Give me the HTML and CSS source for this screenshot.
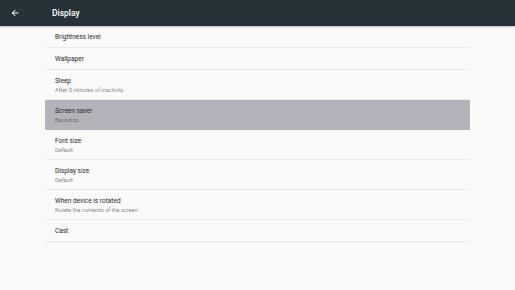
FILE: index.html
```html
<!DOCTYPE html>
<html lang="en">
<head>
    <meta charset="UTF-8">
    <meta name="viewport" content="width=device-width, initial-scale=1.0">
    <title>Display</title>
    <link rel="stylesheet" href="styles.css">
</head>
<body>
    <header class="app-bar">
        <button class="back-button" aria-label="Back">
            <svg width="10" height="10" viewBox="0 0 24 24">
                <path d="M20 11H7.83l5.59-5.59L12 4l-8 8 8 8 1.41-1.41L7.83 13H20v-2z" fill="#fff"/>
            </svg>
        </button>
        <h1>Display</h1>
    </header>

    <ul class="settings-list">
        <li class="setting single"><span class="title">Brightness level</span></li>
        <li class="setting single"><span class="title">Wallpaper</span></li>
        <li class="setting"><span class="title">Sleep</span><span class="summary">After 5 minutes of inactivity</span></li>
        <li class="setting selected"><span class="title">Screen saver</span><span class="summary">Backdrop</span></li>
        <li class="setting"><span class="title">Font size</span><span class="summary">Default</span></li>
        <li class="setting"><span class="title">Display size</span><span class="summary">Default</span></li>
        <li class="setting"><span class="title">When device is rotated</span><span class="summary">Rotate the contents of the screen</span></li>
        <li class="setting single"><span class="title">Cast</span></li>
    </ul>
</body>
</html>
```

FILE: styles.css
```css
body {
    margin: 0;
    font-family: Roboto, "Noto Sans", sans-serif;
    background-color: #fafafa;
}

.app-bar {
    display: flex;
    align-items: center;
    height: 26px;
    background-color: #263238;
    box-shadow: 0 1px 2px rgba(0, 0, 0, 0.25);
}

.back-button {
    display: flex;
    align-items: center;
    justify-content: center;
    width: 10px;
    height: 10px;
    margin-left: 10px;
    padding: 0;
    border: none;
    background: none;
}

.app-bar h1 {
    margin: 0 0 0 32px;
    color: #fff;
    font-size: 8.5px;
    font-weight: 500;
}

.settings-list {
    list-style-type: none;
    margin: 0 0 0 45px;
    padding: 0;
    width: 425px;
}

.setting {
    display: flex;
    flex-direction: column;
    justify-content: center;
    height: 30px;
    padding: 2px 0 0 10px;
    border-bottom: 1px solid #ececec;
    box-sizing: border-box;
}

.setting.single {
    height: 22px;
}

.setting.selected {
    background-color: #b4b3bb;
    border-bottom-color: #b4b3bb;
}

.title {
    color: #262626;
    font-size: 6.5px;
    line-height: 9px;
}

.summary {
    color: #8a8a8a;
    font-size: 5.6px;
    line-height: 8px;
}

.selected .summary {
    color: #6e6e72;
}
```
